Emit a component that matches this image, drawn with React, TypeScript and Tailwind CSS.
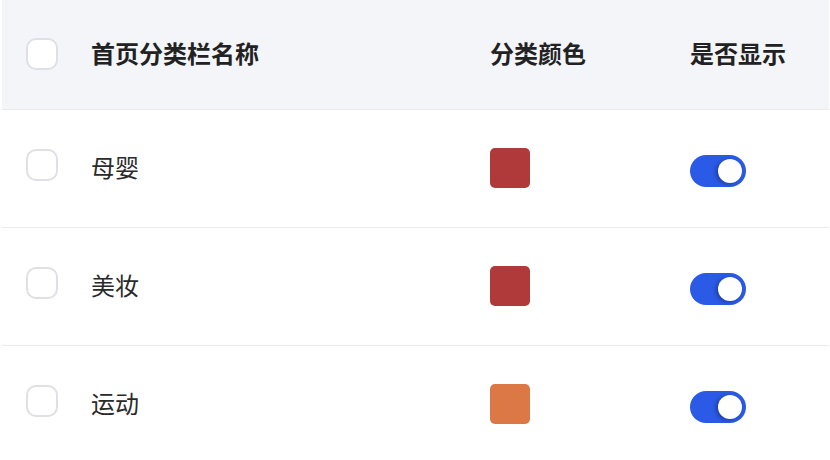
import React from "react";

const rows = [
  { name: "母婴", color: "#b03a3a" },
  { name: "美妆", color: "#b03a3a" },
  { name: "运动", color: "#dc7846" },
];

function Checkbox({ className = "" }: { className?: string }) {
  return (
    <div
      className={`w-[32px] h-[32px] rounded-[10px] border-2 border-[#dfe0e5] bg-white ${className}`}
    />
  );
}

function Toggle({ className = "" }: { className?: string }) {
  return (
    <div
      className={`w-[56px] h-[32px] rounded-full bg-[#2b5be6] relative ${className}`}
    >
      <div className="absolute right-[4px] top-[4px] w-[24px] h-[24px] rounded-full bg-white shadow-[-2px_1px_4px_rgba(0,0,40,0.35)]" />
    </div>
  );
}

export default function App() {
  return (
    <div
      className="w-[830px] h-[460px] overflow-hidden bg-white pl-[2px] pr-[1px]"
      style={{ fontFamily: '"Noto Sans CJK SC", "Noto Sans", sans-serif' }}
    >
      <div className="grid grid-cols-[89px_399px_200px_1fr] h-[110px] items-center bg-[#f4f5f9] border-b border-[#e8eaef] text-[24px] font-bold text-[#222]">
        <div className="pl-[24px]">
          <Checkbox className="-mt-[2px]" />
        </div>
        <div className="-mt-[3px] leading-none">首页分类栏名称</div>
        <div className="-mt-[3px] leading-none">分类颜色</div>
        <div className="-mt-[3px] leading-none">是否显示</div>
      </div>
      {rows.map((r, i) => (
        <div
          key={i}
          className="grid grid-cols-[89px_399px_200px_1fr] h-[118px] items-center border-b border-[#e8eaef] text-[24px] text-[#2a2a2a]"
        >
          <div className="pl-[24px]">
            <Checkbox className="-mt-[7px]" />
          </div>
          <div className="-mt-[3px] leading-none">{r.name}</div>
          <div>
            <div
              className="w-[40px] h-[40px] rounded-[5px] -mt-[1px]"
              style={{ backgroundColor: r.color }}
            />
          </div>
          <div>
            <Toggle className="mt-[5px]" />
          </div>
        </div>
      ))}
    </div>
  );
}
